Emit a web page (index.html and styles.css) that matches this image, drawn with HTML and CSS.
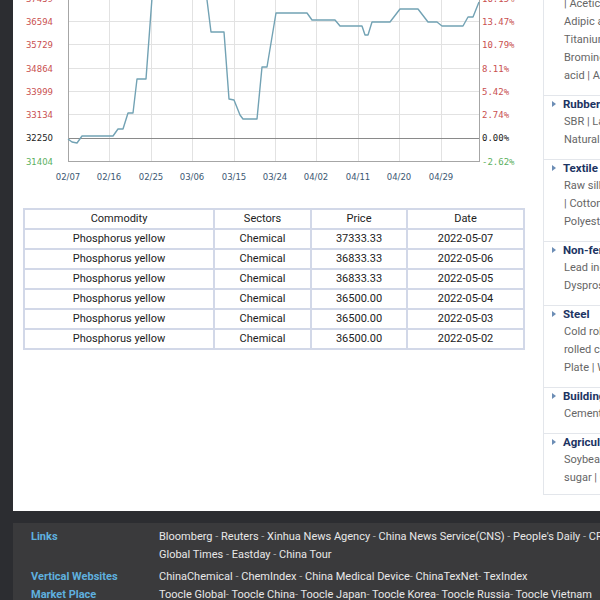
FILE: index.html
```html
<!DOCTYPE html>
<html>
<head>
<meta charset="utf-8">
<link rel="stylesheet" href="styles.css">
</head>
<body>
<div class="wrap">
  <div class="panel">
    <div class="content">
      <svg class="chart" width="530" height="190" viewBox="13 0 530 190">
        <g class="grid">
          <line x1="68" y1="-1.5" x2="479" y2="-1.5"/>
          <line x1="68" y1="21.5" x2="479" y2="21.5"/>
          <line x1="68" y1="44.5" x2="479" y2="44.5"/>
          <line x1="68" y1="68.5" x2="479" y2="68.5"/>
          <line x1="68" y1="91.5" x2="479" y2="91.5"/>
          <line x1="68" y1="114.5" x2="479" y2="114.5"/>
          <line x1="109.5" y1="-5" x2="109.5" y2="161"/>
          <line x1="151.5" y1="-5" x2="151.5" y2="161"/>
          <line x1="192.5" y1="-5" x2="192.5" y2="161"/>
          <line x1="234.5" y1="-5" x2="234.5" y2="161"/>
          <line x1="275.5" y1="-5" x2="275.5" y2="161"/>
          <line x1="316.5" y1="-5" x2="316.5" y2="161"/>
          <line x1="358.5" y1="-5" x2="358.5" y2="161"/>
          <line x1="399.5" y1="-5" x2="399.5" y2="161"/>
          <line x1="441.5" y1="-5" x2="441.5" y2="161"/>
        </g>
        <line class="base" x1="68" y1="138.5" x2="479" y2="138.5"/>
        <g class="axis">
          <line x1="68.5" y1="-5" x2="68.5" y2="162"/>
          <line x1="479.5" y1="-5" x2="479.5" y2="162"/>
          <line x1="68" y1="161.5" x2="480" y2="161.5"/>
        </g>
        <polyline class="series" points="68,139 72,142 77,143 82,136 113,136 118,129 123,129 128,113 133,113 137,79 146,79 152,-2 155,-15 200,-15 207,0 211,32 224,32 229,99 234,100 240,115 243,119 257,119 262,67 267,67 276,13 307,13 312,20 335,20 340,26 362,26 365,35 368,35 372,22 390,22 400,9 418,9 428,22 437,22 442,26 463,26 468,17 473,17 479,2"/>
        <g class="ylab">
          <text class="up" x="53" y="2">37459</text>
          <text class="up" x="53" y="25">36594</text>
          <text class="up" x="53" y="48">35729</text>
          <text class="up" x="53" y="72">34864</text>
          <text class="up" x="53" y="95">33999</text>
          <text class="up" x="53" y="118">33134</text>
          <text class="zero" x="53" y="141">32250</text>
          <text class="down" x="53" y="165">31404</text>
        </g>
        <g class="rlab">
          <text class="up" x="482" y="2">16.15%</text>
          <text class="up" x="482" y="25">13.47%</text>
          <text class="up" x="482" y="48">10.79%</text>
          <text class="up" x="482" y="72">8.11%</text>
          <text class="up" x="482" y="95">5.42%</text>
          <text class="up" x="482" y="118">2.74%</text>
          <text class="zero" x="482" y="141">0.00%</text>
          <text class="down" x="482" y="165">-2.62%</text>
        </g>
        <g class="xlab">
          <text x="68" y="180">02/07</text>
          <text x="109" y="180">02/16</text>
          <text x="151" y="180">02/25</text>
          <text x="192" y="180">03/06</text>
          <text x="234" y="180">03/15</text>
          <text x="275" y="180">03/24</text>
          <text x="316" y="180">04/02</text>
          <text x="358" y="180">04/11</text>
          <text x="399" y="180">04/20</text>
          <text x="441" y="180">04/29</text>
        </g>
      </svg>
      <table class="prices">
        <colgroup>
          <col class="c1"><col class="c2"><col class="c3"><col class="c4">
        </colgroup>
        <tr><td>Commodity</td><td>Sectors</td><td>Price</td><td>Date</td></tr>
        <tr><td>Phosphorus yellow</td><td>Chemical</td><td>37333.33</td><td>2022-05-07</td></tr>
        <tr><td>Phosphorus yellow</td><td>Chemical</td><td>36833.33</td><td>2022-05-06</td></tr>
        <tr><td>Phosphorus yellow</td><td>Chemical</td><td>36833.33</td><td>2022-05-05</td></tr>
        <tr><td>Phosphorus yellow</td><td>Chemical</td><td>36500.00</td><td>2022-05-04</td></tr>
        <tr><td>Phosphorus yellow</td><td>Chemical</td><td>36500.00</td><td>2022-05-03</td></tr>
        <tr><td>Phosphorus yellow</td><td>Chemical</td><td>36500.00</td><td>2022-05-02</td></tr>
      </table>
    </div>
    <div class="sidebar">
      <div class="cat">
        <div class="title">Chemical</div>
        <div class="ln">Caustic soda | Soda ash</div>
        <div class="ln">Methanol | Ethanol</div>
        <div class="ln">| Acetic acid | Acetone</div>
        <div class="ln">Adipic acid | Aniline</div>
        <div class="ln">Titanium dioxide | PVC</div>
        <div class="ln">Bromine | Sulfuric</div>
        <div class="ln">acid | Acrylic acid</div>
      </div>
      <div class="cat">
        <div class="title">Rubber</div>
        <div class="ln">SBR | Latex | BR</div>
        <div class="ln">Natural rubber | NBR</div>
      </div>
      <div class="cat">
        <div class="title">Textile</div>
        <div class="ln">Raw silk | Viscose</div>
        <div class="ln">| Cotton | Spandex</div>
        <div class="ln">Polyester yarn</div>
      </div>
      <div class="cat">
        <div class="title">Non-ferrous metals</div>
        <div class="ln">Lead ingot | Copper</div>
        <div class="ln">Dysprosium oxide</div>
      </div>
      <div class="cat">
        <div class="title">Steel</div>
        <div class="ln">Cold rolled sheet | Hot</div>
        <div class="ln">rolled coil | Rebar</div>
        <div class="ln">Plate | Wire rod</div>
      </div>
      <div class="cat">
        <div class="title">Building materials</div>
        <div class="ln">Cement | Glass</div>
      </div>
      <div class="cat">
        <div class="title">Agricultural</div>
        <div class="ln">Soybean meal | White</div>
        <div class="ln">sugar | Corn</div>
      </div>
    </div>
  </div>
  <div class="footer">
    <div class="label">Links</div>
    <div class="links links-first">Bloomberg <span class="sep">-</span> Reuters <span class="sep">-</span> Xinhua News Agency <span class="sep">-</span> China News Service(CNS) <span class="sep">-</span> People's Daily <span class="sep">-</span> CRI <span class="sep">-</span> China Daily <span class="sep">-</span><br>Global Times <span class="sep">-</span> Eastday <span class="sep">-</span> China Tour</div>
    <div class="label">Vertical Websites</div>
    <div class="links">ChinaChemical <span class="sep">-</span> ChemIndex <span class="sep">-</span> China Medical Device<span class="sep">-</span> ChinaTexNet<span class="sep">-</span> TexIndex</div>
    <div class="label">Market Place</div>
    <div class="links">Toocle Global<span class="sep">-</span> Toocle China<span class="sep">-</span> Toocle Japan<span class="sep">-</span> Toocle Korea<span class="sep">-</span> Toocle Russia<span class="sep">-</span> Toocle Vietnam</div>
  </div>
</div>
</body>
</html>
```
FILE: styles.css
```css
html, body {
  margin: 0;
  padding: 0;
  overflow: hidden;
  background: #2c2d31;
  font-family: Roboto, "Liberation Sans", Arial, sans-serif;
}
.wrap {
  margin-left: 13px;
  width: 800px;
}
.panel {
  background: #ffffff;
  display: flex;
  align-items: flex-start;
}
.content {
  width: 530px;
  flex: none;
}
.chart {
  display: block;
}
.grid line {
  stroke: #e2e2e2;
  stroke-width: 1;
}
.base {
  stroke: #8a8a8a;
  stroke-width: 1;
}
.axis line {
  stroke: #a6a6a6;
  stroke-width: 1;
}
.series {
  fill: none;
  stroke: #72a2b4;
  stroke-width: 1.4;
  stroke-linejoin: round;
}
.ylab text {
  font-family: "DejaVu Sans", Verdana, sans-serif;
  font-size: 8.5px;
  text-anchor: end;
}
.rlab text {
  font-family: "DejaVu Sans Mono", "Liberation Mono", monospace;
  font-size: 9px;
}
.up { fill: #c9504f; }
.zero { fill: #222222; }
.down { fill: #5cb060; }
.xlab text {
  font-family: "DejaVu Sans", Verdana, sans-serif;
  font-size: 8.5px;
  fill: #3c5872;
  text-anchor: middle;
}
.prices {
  margin: 18px 0 0 10px;
  border-collapse: collapse;
  width: 500px;
  table-layout: fixed;
  font-size: 11px;
  color: #222;
}
.c1 { width: 190px; }
.c2 { width: 97px; }
.c3 { width: 96px; }
.c4 { width: 117px; }
.prices td {
  border: 2px solid #d2d8e8;
  height: 18px;
  padding: 0;
  line-height: 18px;
  text-align: center;
}
.sidebar {
  flex: none;
  width: 210px;
  margin-top: -58px;
  margin-bottom: 16px;
  margin-left: 0;
  border-left: 1px solid #e3e6eb;
  border-bottom: 1px solid #e3e6eb;
  font-size: 11px;
}
.cat {
  padding-bottom: 10px;
  border-bottom: 1px solid #e3e6eb;
}
.cat:last-child {
  border-bottom: none;
  padding-bottom: 7px;
}
.title {
  line-height: 17px;
  font-weight: bold;
  font-size: 11.5px;
  color: #1c3463;
  padding-left: 8px;
  white-space: nowrap;
}
.title::before {
  content: "";
  display: inline-block;
  width: 0;
  height: 0;
  border-left: 4px solid #6c8db5;
  border-top: 3px solid transparent;
  border-bottom: 3px solid transparent;
  margin-right: 7px;
  vertical-align: 1px;
}
.ln {
  line-height: 18px;
  color: #666;
  padding-left: 20px;
  white-space: nowrap;
}
.footer {
  margin-top: 12px;
  background: #3a3a3c;
  padding: 5px 0 10px 18px;
  display: grid;
  grid-template-columns: 128px 1fr;
  font-size: 11px;
  line-height: 18px;
}
.label {
  color: #5fb0df;
  font-weight: bold;
}
.links {
  color: #e8e8e8;
  white-space: nowrap;
}
.links-first {
  margin-bottom: 4px;
}
.sep {
  color: #a8a8a8;
}
```
